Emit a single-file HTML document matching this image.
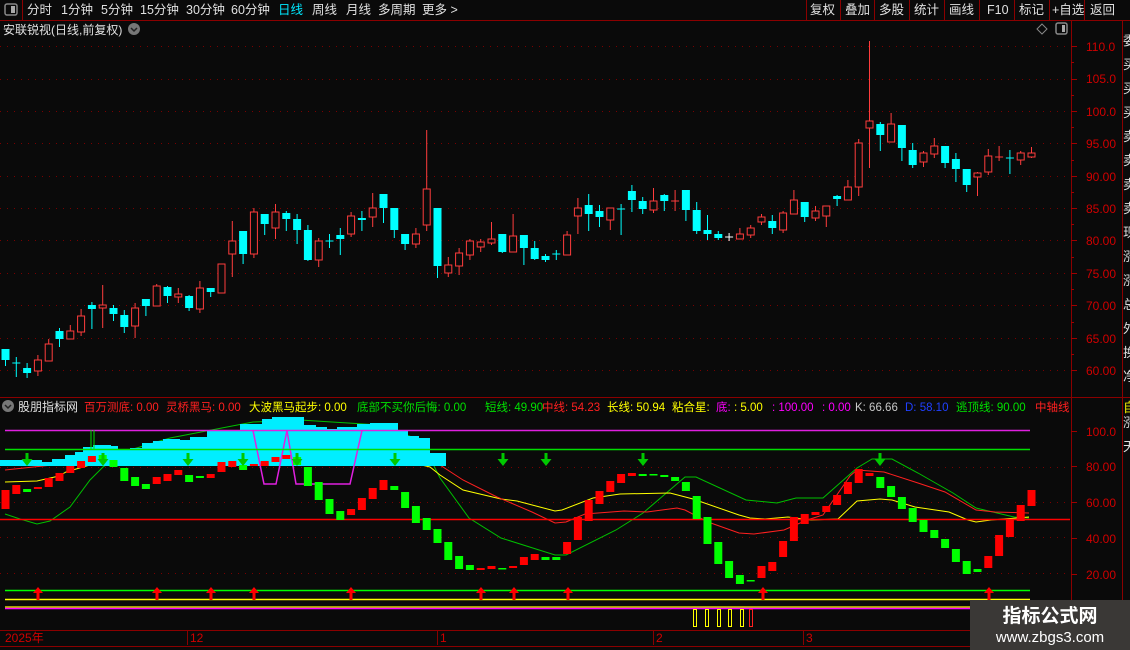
<!DOCTYPE html>
<html><head><meta charset="utf-8"><style>
html,body{margin:0;padding:0;background:#0a0a0a;width:1130px;height:650px;overflow:hidden}
svg{display:block;font-family:"Liberation Sans","Noto Sans CJK SC",sans-serif}
</style></head><body>
<svg width="1130" height="650" viewBox="0 0 1130 650" xmlns="http://www.w3.org/2000/svg">
<rect width="1130" height="650" fill="#0a0a0a"/>
<g stroke="#8b0000" stroke-width="1" fill="none">
<path d="M0 20.5H1130M22.5 0V20M806.5 0V20M840.5 0V20M874.5 0V20M909.5 0V20M944.5 0V20M979.5 0V20M1014.5 0V20M1049.5 0V20M1084.5 0V20M1122.5 20V650M1071.5 20V630M0 397.5H1130M0 630.5H1071M0 646.5H970"/>
</g>
<rect x="5" y="4" width="12" height="11" rx="2" fill="none" stroke="#888" stroke-width="1.5"/><rect x="11" y="6" width="4" height="7" fill="#aaa"/>
<g font-size="12.5" fill="#e0e0e0">
<text x="27" y="14">分时</text><text x="61" y="14">1分钟</text><text x="101" y="14">5分钟</text><text x="140" y="14">15分钟</text><text x="186" y="14">30分钟</text><text x="231" y="14">60分钟</text><text x="278" y="14" fill="#00e8ff">日线</text><text x="312" y="14">周线</text><text x="346" y="14">月线</text><text x="378" y="14">多周期</text><text x="422" y="14">更多 &gt;</text>
<text x="810" y="14">复权</text><text x="845" y="14">叠加</text><text x="879" y="14">多股</text><text x="914" y="14">统计</text><text x="949" y="14">画线</text><text x="987" y="14">F10</text><text x="1019" y="14">标记</text><text x="1052" y="14">+自选</text><text x="1090" y="14">返回</text>
<text x="3" y="34" font-size="12">安联锐视(日线,前复权)</text>
</g>
<circle cx="134" cy="29" r="6" fill="#777"/><path d="M131 28l3 3 3-3" stroke="#222" stroke-width="1.5" fill="none"/>
<path d="M1042 24l5 5-5 5-5-5z" fill="none" stroke="#888"/>
<rect x="1056" y="23" width="11" height="11" rx="2" fill="none" stroke="#888" stroke-width="1.5"/><rect x="1062" y="25" width="3" height="7" fill="#aaa"/>
<g stroke="#7a0000" stroke-dasharray="1 6" stroke-width="1">
<path d="M0 46.5H1070M0 79.5H1070M0 111.5H1070M0 143.5H1070M0 176.5H1070M0 208.5H1070M0 240.5H1070M0 273.5H1070M0 305.5H1070M0 338.5H1070M0 370.5H1070"/>
<path d="M0 467.5H1070M0 502.5H1070M0 537.5H1070M0 573.5H1070"/>
</g>
<g stroke="#a00000"><path d="M1071 46.5h6M1071 79.5h6M1071 111.5h6M1071 143.5h6M1071 176.5h6M1071 208.5h6M1071 240.5h6M1071 273.5h6M1071 305.5h6M1071 338.5h6M1071 370.5h6M1071 62.5h3M1071 95.5h3M1071 127.5h3M1071 160.5h3M1071 192.5h3M1071 224.5h3M1071 257.5h3M1071 289.5h3M1071 322.5h3M1071 354.5h3M1071 431.5h6M1071 466.5h6M1071 502.5h6M1071 538.5h6M1071 574.5h6"/></g>
<g fill="#d00000" font-size="12">
<text x="1086" y="51">110.0</text><text x="1086" y="83">105.0</text><text x="1086" y="116">100.0</text><text x="1086" y="148">95.00</text><text x="1086" y="181">90.00</text><text x="1086" y="213">85.00</text><text x="1086" y="245">80.00</text><text x="1086" y="278">75.00</text><text x="1086" y="310">70.00</text><text x="1086" y="343">65.00</text><text x="1086" y="375">60.00</text>
<text x="1086" y="436">100.0</text><text x="1086" y="471">80.00</text><text x="1086" y="507">60.00</text><text x="1086" y="543">40.00</text><text x="1086" y="579">20.00</text>
</g>
<g fill="#ddd" font-size="13"><text x="1123" y="45">委</text><text x="1123" y="69">买</text><text x="1123" y="93">买</text><text x="1123" y="117">买</text><text x="1123" y="141">卖</text><text x="1123" y="165">卖</text><text x="1123" y="189">卖</text><text x="1123" y="213">卖</text><text x="1123" y="237">现</text><text x="1123" y="261">涨</text><text x="1123" y="285">涨</text><text x="1123" y="309">总</text><text x="1123" y="333">外</text><text x="1123" y="357">换</text><text x="1123" y="381">净</text><text x="1123" y="427">涨</text><text x="1123" y="451">天</text></g>
<text x="1123" y="412" fill="#e8e800" font-size="13">自</text>
<g stroke="#00ffff" stroke-width="1" fill="none">
<path d="M5.5 349V366M16.3 357V377M12.3 363H20.3M27.1 363V378M59.5 328V347M91.9 302V329M113.5 305V321M124.3 310V333M145.9 299V316M167.5 286V303M189.1 295V311M210.7 288V297M243.1 231V264M264.7 214V235M286.3 211V231M297.1 214V244M307.9 225V261M329.5 234V248M325.5 241H333.5M340.3 228V255M361.9 211V231M383.5 194V223M394.3 208V238M405.1 234V250M437.5 208V278M502.3 234V253M523.9 235V265M534.7 241V260M545.5 254V262M556.3 250V260M552.3 254H560.3M588.7 194V231M599.5 205V227M621.1 204V235M617.1 209H625.1M631.9 185V212M642.7 197V214M664.3 194V211M685.9 190V221M696.7 202V234M707.5 215V240M718.3 231V240M772.3 215V234M804.7 202V222M837.1 195V206M880.3 122V151M901.9 125V161M912.7 143V168M945.1 146V168M955.9 153V182M966.7 169V192M1009.9 150V174M1005.9 158H1013.9"/>
</g>
<path d="M729.1 233V241M725.1 237H733.1" stroke="#fff" fill="none"/>
<g fill="#00ffff">
<rect x="1.5" y="349" width="8" height="11"/><rect x="23.1" y="368" width="8" height="5"/><rect x="55.5" y="331" width="8" height="8"/><rect x="87.9" y="305" width="8" height="4"/><rect x="109.5" y="308" width="8" height="6"/><rect x="120.3" y="315" width="8" height="12"/><rect x="141.9" y="299" width="8" height="7"/><rect x="163.5" y="287" width="8" height="9"/><rect x="185.1" y="296" width="8" height="12"/><rect x="206.7" y="288" width="8" height="4"/><rect x="239.1" y="231" width="8" height="23"/><rect x="260.7" y="214" width="8" height="10"/><rect x="282.3" y="213" width="8" height="6"/><rect x="293.1" y="219" width="8" height="11"/><rect x="303.9" y="230" width="8" height="30"/><rect x="336.3" y="235" width="8" height="4"/><rect x="357.9" y="218" width="8" height="2"/><rect x="379.5" y="194" width="8" height="14"/><rect x="390.3" y="208" width="8" height="22"/><rect x="401.1" y="234" width="8" height="10"/><rect x="433.5" y="208" width="8" height="58"/><rect x="498.3" y="234" width="8" height="18"/><rect x="519.9" y="235" width="8" height="13"/><rect x="530.7" y="248" width="8" height="11"/><rect x="541.5" y="256" width="8" height="4"/><rect x="584.7" y="205" width="8" height="9"/><rect x="595.5" y="211" width="8" height="6"/><rect x="627.9" y="191" width="8" height="9"/><rect x="638.7" y="201" width="8" height="8"/><rect x="660.3" y="195" width="8" height="6"/><rect x="681.9" y="190" width="8" height="20"/><rect x="692.7" y="210" width="8" height="21"/><rect x="703.5" y="230" width="8" height="4"/><rect x="714.3" y="234" width="8" height="4"/><rect x="768.3" y="221" width="8" height="7"/><rect x="800.7" y="202" width="8" height="15"/><rect x="833.1" y="196" width="8" height="3"/><rect x="876.3" y="124" width="8" height="11"/><rect x="897.9" y="125" width="8" height="23"/><rect x="908.7" y="150" width="8" height="15"/><rect x="941.1" y="146" width="8" height="17"/><rect x="951.9" y="159" width="8" height="10"/><rect x="962.7" y="169" width="8" height="16"/>
</g>
<g stroke="#ff3c3c" stroke-width="1">
<path fill="none" d="M37.9 355V376M48.7 339V361M70.3 325V339M81.1 309V336M102.7 285V328M135.1 303V338M156.7 284V306M178.3 288V303M199.9 281V313M221.5 264V293M232.3 221V277M253.9 208V258M275.5 204V239M318.7 238V267M351.1 212V237M372.7 193V227M415.9 228V248M426.7 130V231M448.3 257V277M459.1 248V275M469.9 239V260M480.7 239V252M491.5 222V245M513.1 214V252M567.1 231V255M577.9 198V234M610.3 208V230M653.5 188V213M675.1 190V211M671.1 201H679.1M739.9 228V239M750.7 225V238M761.5 214V225M783.1 211V233M793.9 190V214M815.5 206V221M826.3 206V227M847.9 180V200M858.7 139V196M869.5 41V168M891.1 113V142M923.5 151V167M934.3 138V158M977.5 172V196M988.3 149V175M999.1 146V161M995.1 157H1003.1M1020.7 151V165M1031.5 147V158"/>
<g fill="#0a0a0a">
<rect x="34.4" y="360" width="7" height="11"/><rect x="45.2" y="344" width="7" height="17"/><rect x="66.8" y="331" width="7" height="8"/><rect x="77.6" y="316" width="7" height="16"/><rect x="99.2" y="305" width="7" height="3"/><rect x="131.6" y="308" width="7" height="18"/><rect x="153.2" y="286" width="7" height="20"/><rect x="174.8" y="294" width="7" height="3"/><rect x="196.4" y="288" width="7" height="21"/><rect x="218" y="264" width="7" height="29"/><rect x="228.8" y="241" width="7" height="13"/><rect x="250.4" y="212" width="7" height="42"/><rect x="272" y="212" width="7" height="16"/><rect x="315.2" y="241" width="7" height="19"/><rect x="347.6" y="216" width="7" height="18"/><rect x="369.2" y="208" width="7" height="9"/><rect x="412.4" y="234" width="7" height="10"/><rect x="423.2" y="189" width="7" height="36"/><rect x="444.8" y="265" width="7" height="8"/><rect x="455.6" y="253" width="7" height="13"/><rect x="466.4" y="241" width="7" height="14"/><rect x="477.2" y="242" width="7" height="5"/><rect x="488" y="239" width="7" height="4"/><rect x="509.6" y="236" width="7" height="16"/><rect x="563.6" y="235" width="7" height="20"/><rect x="574.4" y="208" width="7" height="8"/><rect x="606.8" y="208" width="7" height="12"/><rect x="650" y="201" width="7" height="9"/><rect x="736.4" y="234" width="7" height="5"/><rect x="747.2" y="228" width="7" height="7"/><rect x="758" y="217" width="7" height="5"/><rect x="779.6" y="213" width="7" height="17"/><rect x="790.4" y="200" width="7" height="14"/><rect x="812" y="211" width="7" height="7"/><rect x="822.8" y="206" width="7" height="10"/><rect x="844.4" y="187" width="7" height="13"/><rect x="855.2" y="143" width="7" height="44"/><rect x="866" y="121" width="7" height="7"/><rect x="887.6" y="124" width="7" height="18"/><rect x="920" y="153" width="7" height="9"/><rect x="930.8" y="146" width="7" height="8"/><rect x="974" y="173" width="7" height="4"/><rect x="984.8" y="156" width="7" height="16"/><rect x="1017.2" y="153" width="7" height="7"/><rect x="1028" y="153" width="7" height="4"/>
</g></g>
<circle cx="8" cy="406" r="6" fill="#777"/><path d="M5 405l3 3 3-3" stroke="#222" stroke-width="1.5" fill="none"/>
<svg x="0" y="396" width="1071" height="20" overflow="hidden">
<g font-size="11.5">
<text x="18" y="15" fill="#e0e0e0" font-size="12">股朋指标网</text>
<text x="84" y="15" fill="#ff2020">百万测底: 0.00</text>
<text x="166" y="15" fill="#ff2020">灵桥黑马: 0.00</text>
<text x="249" y="15" fill="#ffff00">大波黑马起步: 0.00</text>
<text x="357" y="15" fill="#00e000">底部不买你后悔: 0.00</text>
<text x="485" y="15" fill="#00e000">短线: 49.90</text>
<text x="542" y="15" fill="#ff2020">中线: 54.23</text>
<text x="607" y="15" fill="#ffff00">长线: 50.94</text>
<text x="672" y="15" fill="#ffff00">粘合星:</text>
<text x="716" y="15" fill="#ff00ff">底:</text>
<text x="734" y="15" fill="#ffff00">: 5.00</text>
<text x="772" y="15" fill="#ff00ff">: 100.00</text>
<text x="822" y="15" fill="#ff00ff">: 0.00</text>
<text x="855" y="15" fill="#c8c8c8">K: 66.66</text>
<text x="905" y="15" fill="#2040ff">D: 58.10</text>
<text x="956" y="15" fill="#00e000">逃顶线: 90.00</text>
<text x="1035" y="15" fill="#ff2020">中轴线</text>
</g></svg>
<polyline fill="none" stroke="#00c000" stroke-width="1" points="5,514 20,519 37,524 50,521 70,507 90,480 103,467 130,450 170,438 227,427 253,422 300,420 380,425 420,440 432,462 440,478 469,518 501,538 555,555 566,555 616,530 643,513 685,477 696,477 746,500 777,503 796,498 823,498 857,468 872,459 892,459 918,473 953,493 976,508 1014,517 1029,518"/>
<polyline fill="none" stroke="#ffff00" stroke-width="1" points="5,482 37,481 59,476 66,472 100,462 200,458 300,458 400,460 430,467 440,475 463,490 501,499 517,501 555,511 562,510 593,498 620,494 670,493 693,499 739,515 750,518 765,519 788,517 811,520 838,519 857,501 880,499 892,500 915,507 949,512 968,520 976,522 991,520 1029,517"/>
<polyline fill="none" stroke="#ff2020" stroke-width="1" points="5,470 100,460 300,455 420,452 432,455 440,465 463,480 497,497 532,512 555,523 566,522 585,514 624,511 647,512 677,508 685,510 708,522 739,533 754,534 784,530 807,520 823,515 850,476 857,470 884,472 918,483 945,492 976,510 995,512 1029,513"/>
<path fill="#00eeff" d="M0 466V460H42V462H52V459H65V455H75V452H83V447H93V445H111V446H118V450H130V448H142V443H153V441H163V439H180V440H190V437H207V431H240V424H262V419H272V417H304V425H316V427H327V429H337V427H357V424H370V423H398V430H408V436H419V438H430V453H446V466Z"/>
<path d="M0 519.5H1070" stroke="#ff0000" stroke-width="1.5"/>
<path d="M5 430.5H1030" stroke="#e020e0" stroke-width="1.5"/>
<path d="M253 430.5L264 484H276L287 430.5L296 484H350L362 430.5" stroke="#e020e0" stroke-width="1.5" fill="none"/>
<path d="M5 449.5H1030" stroke="#00e000" stroke-width="1.5"/>
<path d="M91 430V449M94 430V449" stroke="#00e000" stroke-width="1"/>
<g fill="#ff0000">
<rect x="1.5" y="490" width="8" height="19"/><rect x="12.3" y="485" width="8" height="9"/><rect x="33.9" y="487" width="8" height="2"/><rect x="44.7" y="478" width="8" height="9"/><rect x="55.5" y="473" width="8" height="8"/><rect x="66.3" y="466" width="8" height="7"/><rect x="77.1" y="461" width="8" height="7"/><rect x="87.9" y="456" width="8" height="6"/><rect x="152.7" y="477" width="8" height="7"/><rect x="163.5" y="474" width="8" height="7"/><rect x="174.3" y="470" width="8" height="5"/><rect x="206.7" y="474" width="8" height="4"/><rect x="217.5" y="462" width="8" height="10"/><rect x="228.3" y="461" width="8" height="6"/><rect x="249.9" y="464" width="8" height="2"/><rect x="260.7" y="461" width="8" height="5"/><rect x="271.5" y="457" width="8" height="5"/><rect x="282.3" y="455" width="8" height="4"/><rect x="347.1" y="509" width="8" height="6"/><rect x="357.9" y="498" width="8" height="12"/><rect x="368.7" y="488" width="8" height="11"/><rect x="379.5" y="480" width="8" height="10"/><rect x="476.7" y="568" width="8" height="2"/><rect x="487.5" y="566" width="8" height="3"/><rect x="509.1" y="566" width="8" height="2"/><rect x="519.9" y="557" width="8" height="8"/><rect x="530.7" y="554" width="8" height="6"/><rect x="563.1" y="542" width="8" height="12"/><rect x="573.9" y="517" width="8" height="23"/><rect x="584.7" y="500" width="8" height="21"/><rect x="595.5" y="491" width="8" height="13"/><rect x="606.3" y="481" width="8" height="11"/><rect x="617.1" y="474" width="8" height="9"/><rect x="627.9" y="473" width="8" height="3"/><rect x="757.5" y="566" width="8" height="12"/><rect x="768.3" y="562" width="8" height="9"/><rect x="779.1" y="541" width="8" height="16"/><rect x="789.9" y="517" width="8" height="24"/><rect x="800.7" y="514" width="8" height="10"/><rect x="811.5" y="512" width="8" height="3"/><rect x="822.3" y="506" width="8" height="6"/><rect x="833.1" y="495" width="8" height="10"/><rect x="843.9" y="482" width="8" height="12"/><rect x="854.7" y="469" width="8" height="14"/><rect x="865.5" y="473" width="8" height="3"/><rect x="984.3" y="556" width="8" height="12"/><rect x="995.1" y="535" width="8" height="21"/><rect x="1005.9" y="519" width="8" height="18"/><rect x="1016.7" y="505" width="8" height="16"/><rect x="1027.5" y="490" width="8" height="16"/>
</g>
<g fill="#00ff00">
<rect x="23.1" y="489" width="8" height="3"/><rect x="98.7" y="455" width="8" height="5"/><rect x="109.5" y="460" width="8" height="7"/><rect x="120.3" y="468" width="8" height="13"/><rect x="131.1" y="477" width="8" height="9"/><rect x="141.9" y="484" width="8" height="5"/><rect x="185.1" y="475" width="8" height="7"/><rect x="195.9" y="476" width="8" height="2"/><rect x="239.1" y="465" width="8" height="5"/><rect x="293.1" y="457" width="8" height="8"/><rect x="303.9" y="467" width="8" height="19"/><rect x="314.7" y="482" width="8" height="18"/><rect x="325.5" y="499" width="8" height="15"/><rect x="336.3" y="511" width="8" height="9"/><rect x="390.3" y="486" width="8" height="4"/><rect x="401.1" y="492" width="8" height="16"/><rect x="411.9" y="506" width="8" height="17"/><rect x="422.7" y="518" width="8" height="12"/><rect x="433.5" y="529" width="8" height="14"/><rect x="444.3" y="542" width="8" height="18"/><rect x="455.1" y="556" width="8" height="13"/><rect x="465.9" y="565" width="8" height="5"/><rect x="498.3" y="568" width="8" height="1.5"/><rect x="541.5" y="557" width="8" height="3"/><rect x="552.3" y="557" width="8" height="3"/><rect x="638.7" y="474" width="8" height="2"/><rect x="649.5" y="474" width="8" height="1.5"/><rect x="660.3" y="475" width="8" height="2"/><rect x="671.1" y="477" width="8" height="4"/><rect x="681.9" y="482" width="8" height="9"/><rect x="692.7" y="496" width="8" height="23"/><rect x="703.5" y="517" width="8" height="27"/><rect x="714.3" y="542" width="8" height="22"/><rect x="725.1" y="561" width="8" height="17"/><rect x="735.9" y="575" width="8" height="9"/><rect x="746.7" y="580" width="8" height="1.5"/><rect x="876.3" y="477" width="8" height="11"/><rect x="887.1" y="486" width="8" height="11"/><rect x="897.9" y="497" width="8" height="12"/><rect x="908.7" y="508" width="8" height="14"/><rect x="919.5" y="520" width="8" height="12"/><rect x="930.3" y="530" width="8" height="8"/><rect x="941.1" y="539" width="8" height="9"/><rect x="951.9" y="549" width="8" height="13"/><rect x="962.7" y="561" width="8" height="13"/><rect x="973.5" y="569" width="8" height="3"/>
</g>
<g fill="#00c800">
<path d="M25.5 453h3v6h4l-5.5 7-5.5-7h4z"/><path d="M101.5 453h3v6h4l-5.5 7-5.5-7h4z"/><path d="M186.5 453h3v6h4l-5.5 7-5.5-7h4z"/><path d="M241.5 453h3v6h4l-5.5 7-5.5-7h4z"/><path d="M295.5 453h3v6h4l-5.5 7-5.5-7h4z"/><path d="M393.5 453h3v6h4l-5.5 7-5.5-7h4z"/><path d="M501.5 453h3v6h4l-5.5 7-5.5-7h4z"/><path d="M544.5 453h3v6h4l-5.5 7-5.5-7h4z"/><path d="M641.5 453h3v6h4l-5.5 7-5.5-7h4z"/><path d="M878.5 453h3v6h4l-5.5 7-5.5-7h4z"/>
</g>
<path d="M5 590.5H1030" stroke="#00ff00" stroke-width="1.5"/>
<path d="M5 599.5H1030" stroke="#ffff00" stroke-width="1.5"/>
<path d="M5 607H1030" stroke="#ffff00" stroke-width="1.2"/>
<path d="M5 608.5H1030" stroke="#ff00ff" stroke-width="1.5"/>
<g fill="#ff0000">
<path d="M38 587l5 6h-3.5v7h-3v-7H33z"/><path d="M157 587l5 6h-3.5v7h-3v-7H152z"/><path d="M211 587l5 6h-3.5v7h-3v-7H206z"/><path d="M254 587l5 6h-3.5v7h-3v-7H249z"/><path d="M351 587l5 6h-3.5v7h-3v-7H346z"/><path d="M481 587l5 6h-3.5v7h-3v-7H476z"/><path d="M514 587l5 6h-3.5v7h-3v-7H509z"/><path d="M568 587l5 6h-3.5v7h-3v-7H563z"/><path d="M763 587l5 6h-3.5v7h-3v-7H758z"/><path d="M989 587l5 6h-3.5v7h-3v-7H984z"/>
</g>
<g fill="none" stroke="#ffff00" stroke-width="1">
<rect x="693.5" y="609.5" width="3" height="17"/><rect x="705.5" y="609.5" width="3" height="17"/><rect x="717.5" y="609.5" width="3" height="17"/><rect x="728.5" y="609.5" width="3" height="17"/><rect x="740.5" y="609.5" width="3" height="17"/><rect x="749.5" y="609.5" width="3" height="17" stroke="#ff2020"/>
</g>
<path d="M187.5 630V645M437.5 630V645M653.5 630V645M803.5 630V645" stroke="#8b0000"/>
<g fill="#d00000" font-size="12"><text x="5" y="642">2025年</text><text x="190" y="642">12</text><text x="440" y="642">1</text><text x="656" y="642">2</text><text x="806" y="642">3</text></g>
<rect x="970" y="600" width="160" height="50" fill="#3a3836"/>
<text x="1050" y="622" fill="#fff" font-size="19" font-weight="bold" text-anchor="middle">指标公式网</text>
<text x="1050" y="642" fill="#fff" font-size="15" text-anchor="middle">www.zbgs3.com</text>
</svg>
</body></html>
